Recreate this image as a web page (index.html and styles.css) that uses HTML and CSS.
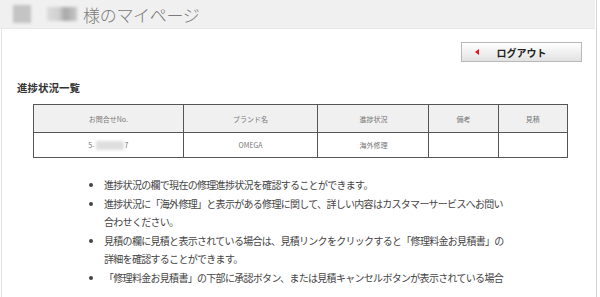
FILE: index.html
```html
<!DOCTYPE html>
<html lang="ja">
<head>
    <meta charset="UTF-8">
    <title>マイページ</title>
    <link rel="stylesheet" href="styles.css">
</head>
<body>
    <div class="page">
        <!-- Header -->
        <div class="header">
            <span class="blur blur-a"></span>
            <span class="blur blur-b"></span>
            <h1>様のマイページ</h1>
        </div>

        <div class="content">
            <div class="logout-row">
                <button class="logout"><span class="arrow"></span>ログアウト</button>
            </div>

            <h2>進捗状況一覧</h2>

            <!-- Progress table -->
            <table class="progress">
                <tr>
                    <th class="c1">お問合せNo.</th>
                    <th class="c2">ブランド名</th>
                    <th class="c3">進捗状況</th>
                    <th class="c4">備考</th>
                    <th class="c5">見積</th>
                </tr>
                <tr>
                    <td>5-<span class="blur blur-no"></span>7</td>
                    <td>OMEGA</td>
                    <td>海外修理</td>
                    <td></td>
                    <td></td>
                </tr>
            </table>

            <ul class="notes">
                <li>進捗状況の欄で現在の修理進捗状況を確認することができます。</li>
                <li>進捗状況に「海外修理」と表示がある修理に関して、詳しい内容はカスタマーサービスへお問い合わせください。</li>
                <li>見積の欄に見積と表示されている場合は、見積リンクをクリックすると「修理料金お見積書」の詳細を確認することができます。</li>
                <li>「修理料金お見積書」の下部に承認ボタン、または見積キャンセルボタンが表示されている場合</li>
            </ul>
        </div>
    </div>
</body>
</html>
```

FILE: styles.css
```css
/* General */
body {
    margin: 0;
    font-family: "Noto Sans CJK JP", "Noto Sans", sans-serif;
    background: #ffffff;
    color: #444;
    overflow: hidden;
}

.page {
    width: 596px;
    height: 297px;
    border-right: 1px solid #d4d4d4;
}

/* Header */
.header {
    height: 29px;
    width: 595px;
    background: #f0f0f0;
    border-bottom: 1px solid #e8e8e8;
    box-sizing: border-box;
    display: flex;
    align-items: center;
    padding-left: 13px;
}

.header h1 {
    margin: 0 0 0 6px;
    font-size: 17px;
    font-weight: 300;
    color: #7a7a7a;
    letter-spacing: -0.3px;
}

.blur {
    display: inline-block;
    background: #bdbdbd;
    filter: blur(1.5px);
}

.blur-a {
    width: 18px;
    height: 18px;
    margin-right: 16px;
    background: #c4c4c4;
}

.blur-b {
    width: 30px;
    height: 14px;
    background: linear-gradient(90deg, #dcdcdc 0%, #cfcfcf 40%, #a8a8a8 60%, #c8c8c8 100%);
}

/* Content */
.content {
    border-left: 1px solid #e2e2e2;
    margin-left: 1px;
    height: 268px;
}

.logout-row {
    display: flex;
    justify-content: flex-end;
    padding: 13px 14px 0 0;
}

.logout {
    width: 121px;
    height: 20px;
    border: 1px solid #b8b8b8;
    background: linear-gradient(#ffffff, #e2e2e2);
    font-family: inherit;
    font-size: 10px;
    font-weight: bold;
    color: #222;
    display: flex;
    align-items: center;
    justify-content: center;
    position: relative;
    padding: 0;
}

.logout .arrow {
    position: absolute;
    left: 13px;
    top: 6px;
    width: 0;
    height: 0;
    border-top: 3px solid transparent;
    border-bottom: 3px solid transparent;
    border-right: 4px solid #e01818;
}

h2 {
    margin: 19px 0 0 15px;
    font-size: 10.5px;
    font-weight: bold;
    color: #333;
    line-height: 14px;
}

/* Table */
.progress {
    border-collapse: collapse;
    margin: 9px 0 0 31px;
    width: 535px;
    font-size: 7px;
    color: #777;
}

.progress th,
.progress td {
    border: 1px solid #555;
    text-align: center;
    padding: 0;
    font-weight: normal;
}

.progress th {
    background: #f0f0f0;
    height: 27px;
}

.progress td {
    height: 24px;
}

.progress .c1 { width: 150px; }
.progress .c2 { width: 135px; }
.progress .c3 { width: 111px; }
.progress .c4 { width: 69px; }
.progress .c5 { width: 69px; }

.blur-no {
    width: 28px;
    height: 9px;
    background: #dedede;
    vertical-align: middle;
    margin: 0 1px;
}

/* Notes */
.notes {
    margin: 18px 0 0 88px;
    padding: 0 0 0 14px;
    width: 404px;
    font-size: 10px;
    letter-spacing: -0.7px;
    line-height: 18.6px;
    color: #444;
}

.notes li {
    list-style: disc;
}
```
